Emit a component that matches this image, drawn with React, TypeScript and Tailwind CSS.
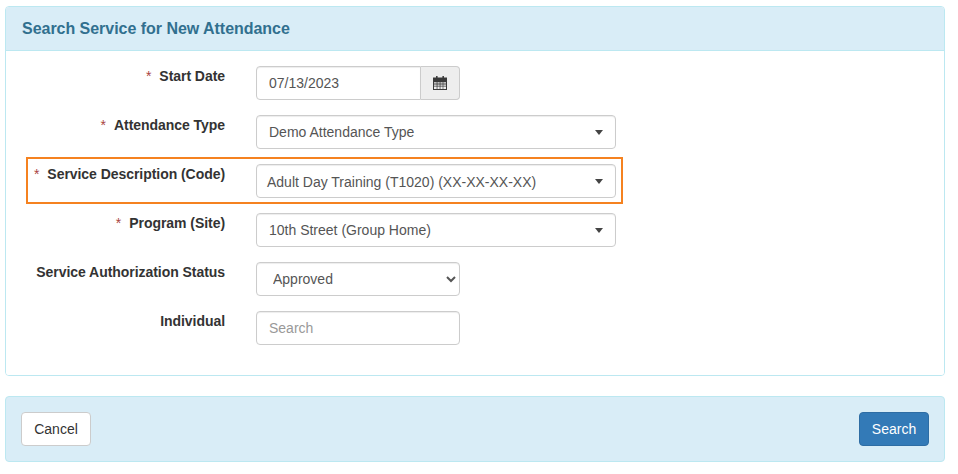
import React, { ReactNode } from 'react';

const fieldClass =
  "h-[34px] rounded border border-[#ccc] bg-white text-sm text-[#555] shadow-[inset_0_1px_1px_rgba(0,0,0,0.075)]";

function CalendarIcon() {
  return (
    <svg width="14" height="14" viewBox="0 0 14 14" className="block">
      <rect x="3" y="0" width="1.6" height="2" fill="#444" />
      <rect x="9.4" y="0" width="1.6" height="2" fill="#444" />
      <path fillRule="evenodd" fill="#3a3a3a" d="M0 1.5h14V14H0zM1 6.3v1.2h2.7V6.3zM4.4 6.3v1.2h2.3V6.3zM7.4 6.3v1.2h2.3V6.3zM10.3 6.3v1.2H13V6.3zM1 8.4v1.3h2.7V8.4zM4.4 8.4v1.3h2.3V8.4zM7.4 8.4v1.3h2.3V8.4zM10.3 8.4v1.3H13V8.4zM1 10.6V13h2.7v-2.4zM4.4 10.6V13h2.3v-2.4zM7.4 10.6V13h2.3v-2.4zM10.3 10.6V13H13v-2.4z" />
    </svg>
  );
}

function FormRow({ label, required, children }: { label: string; required?: boolean; children: ReactNode }) {
  return (
    <div className="flex">
      <label className="w-[219px] shrink-0 text-right text-sm leading-5 font-bold tracking-[-0.05px] text-[#333]">
        {required && <span className="mr-2 font-normal text-[#a94442]">*</span>}
        {label}
      </label>
      <div className="ml-[31px]">{children}</div>
    </div>
  );
}

// select2 style dropdown, not a native select
function Dropdown({ value, tight }: { value: string; tight?: boolean }) {
  return (
    <div className={`${fieldClass} flex w-[360px] items-center justify-between pr-[12px] ${tight ? "pl-[10px]" : "pl-[12px]"}`}>
      <span className={tight ? "pt-[2px]" : ""}>{value}</span>
      <span className="h-0 w-0 border-x-[4px] border-t-[5px] border-x-transparent border-t-[#444]" />
    </div>
  );
}

export default function App() {
  return (
    <div className="min-h-[474px] bg-white pt-[6px] pr-[13px] pl-[5px] font-['Liberation_Sans',Arial,sans-serif]">
      <div className="overflow-hidden rounded border border-[#bce8f1]">
        <div className="flex h-[44px] items-center border-b border-[#bce8f1] bg-[#d9edf7] px-4 text-base font-bold tracking-[-0.03px] text-[#31708f]">
          Search Service for New Attendance
        </div>
        <div className="flex flex-col gap-[15px] bg-white py-[15px] pb-[30px]">
          <FormRow label="Start Date" required>
            <div className="flex w-[204px]">
              <input
                readOnly
                value="07/13/2023"
                className={`${fieldClass} w-[165px] rounded-r-none px-3`}
              />
              <div className="flex h-[34px] flex-1 items-center justify-center rounded-r border border-l-0 border-[#ccc] bg-[#eee]">
                <CalendarIcon />
              </div>
            </div>
          </FormRow>
          <FormRow label="Attendance Type" required>
            <Dropdown value="Demo Attendance Type" />
          </FormRow>
          <div className="relative">
            <FormRow label="Service Description (Code)" required>
              <Dropdown value="Adult Day Training (T1020) (XX-XX-XX-XX)" tight />
            </FormRow>
            {/* orange highlight drawn over the row */}
            <div className="pointer-events-none absolute top-[-7px] left-[20px] h-[47px] w-[597px] border-2 border-[#f58220]" />
          </div>
          <FormRow label="Program (Site)" required>
            <Dropdown value="10th Street (Group Home)" />
          </FormRow>
          <FormRow label="Service Authorization Status">
            <select defaultValue="Approved" className={`${fieldClass} w-[204px] px-3`}>
              <option>Approved</option>
            </select>
          </FormRow>
          <FormRow label="Individual">
            <input
              placeholder="Search"
              className={`${fieldClass} w-[204px] px-3 placeholder:text-[#999]`}
            />
          </FormRow>
        </div>
      </div>
      <div className="mt-5 flex items-center justify-between rounded border border-[#bce8f1] bg-[#d9edf7] p-[15px]">
        <button className="h-[34px] w-[70px] rounded border border-[#ccc] bg-white text-sm text-[#333]">Cancel</button>
        <button className="h-[34px] w-[70px] rounded border border-[#2e6da4] bg-[#337ab7] text-sm text-white">Search</button>
      </div>
    </div>
  );
}
